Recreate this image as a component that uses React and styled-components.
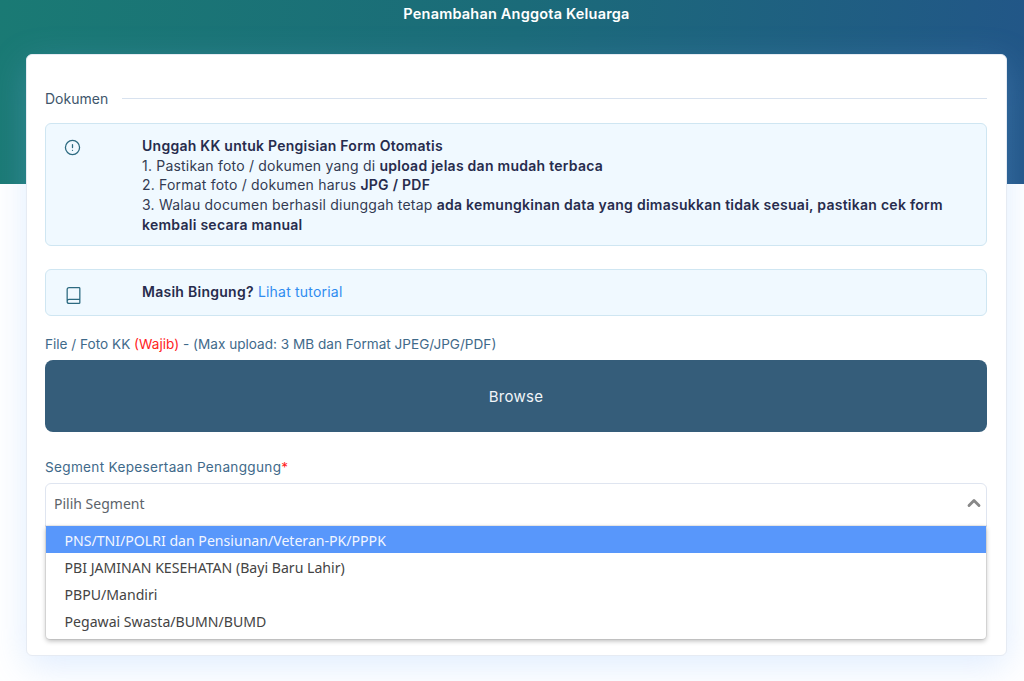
import React from "react";
import styled, { createGlobalStyle } from "styled-components";
import { CircleAlert, Book, ChevronUp } from "lucide-react";

const Global = createGlobalStyle`
  html, body { margin: 0; padding: 0; background: #fff; }
  * { box-sizing: border-box; }
`;
const Page = styled.div`
  height: 681px;
  overflow: hidden;
  font-family: Inter, "Noto Sans", sans-serif;
  background:
    linear-gradient(97deg, #1a7a74 0%, #1b6b79 50%, #225688 100%) top / 100% 184px no-repeat,
    #fff;
  padding: 0 17px 0 26px;
`;
const Title = styled.h1`
  margin: 0;
  height: 54px;
  padding-top: 5px;
  text-align: center;
  font-size: 14.5px;
  line-height: 18px;
  font-weight: 600;
  color: #fff;
  letter-spacing: 0.2px;
`;
const Card = styled.main`
  height: 602px;
  background: #fff;
  border: 1px solid #e6ebf3;
  border-radius: 6px;
  padding: 34px 19px 0 18px;
  box-shadow: 0 10px 36px rgba(130, 180, 250, 0.26);
`;
const Section = styled.div`
  display: flex;
  align-items: center;
  gap: 14px;
  height: 18px;
  font-size: 14px;
  color: #40566b;
`;
const Rule = styled.div`
  flex: 1;
  height: 1px;
  background: #d8e2ef;
`;
const Alert = styled.div`
  display: grid;
  grid-template-columns: 78px 1fr;
  margin-top: ${(p) => p.$top}px;
  min-height: ${(p) => p.$h}px;
  padding: 12px 20px 0 18px;
  background: #f0f9ff;
  border: 1px solid #cfe6f2;
  border-radius: 6px;
  font-size: 14px;
  letter-spacing: 0.2px;
  line-height: 19.7px;
  color: #333b52;
`;
const IconCell = styled.div`
  color: #2c6a80;
  padding-top: ${(p) => p.$pt}px;
`;
const Strong = styled.b`
  font-weight: 600;
  color: #272c4d;
  letter-spacing: 0.26px;
`;
const Link = styled.span`
  color: #2f8cf0;
`;
const Label = styled.div`
  margin-top: ${(p) => p.$top}px;
  font-size: 13.6px;
  line-height: 18px;
  letter-spacing: ${(p) => p.$ls || 0}px;
  color: #3f6a8a;
`;
const Red = styled.span`
  color: #ff2222;
`;
const Browse = styled.div`
  margin-top: 7px;
  height: 72px;
  display: flex;
  align-items: center;
  justify-content: center;
  background: #355d7a;
  border-radius: 8px;
  color: #f1f5f8;
  font-size: 15px;
  letter-spacing: 0.3px;
`;
const SelectWrap = styled.div`
  position: relative;
  margin-top: 7px;
`;
const Control = styled.div`
  height: 44px;
  display: flex;
  align-items: center;
  justify-content: space-between;
  padding: 0 2px 4px 8px;
  background: #fff;
  border: 1px solid #dfe5f0;
  border-radius: 6px 6px 0 0;
  font-family: "Noto Sans", sans-serif;
  font-size: 14px;
  color: #5c636a;
`;
const Menu = styled.ul`
  position: absolute;
  top: 43px;
  left: 1px;
  right: 1px;
  margin: 0;
  padding: 0 0 5px;
  list-style: none;
  background: #fff;
  border-radius: 0 0 4px 4px;
  box-shadow: 0 0 0 1px rgba(0, 0, 0, 0.06), 0 2px 5px rgba(0, 0, 0, 0.28);
  font-family: "Noto Sans", sans-serif;
  font-size: 14.1px;
`;
const Option = styled.li`
  height: 27px;
  padding: 1px 0 0 18.5px;
  line-height: 27px;
  background: ${(p) => (p.$active ? "#5897fb" : "#fff")};
  color: ${(p) => (p.$active ? "#f2f6ff" : "#444")};
`;

export default function App() {
  return (
    <Page>
      <Global />
      <Title>Penambahan Anggota Keluarga</Title>
      <Card>
        <Section>
          Dokumen
          <Rule />
        </Section>
        <Alert $top={16} $h={123}>
          <IconCell $pt={3}>
            <CircleAlert size={17} strokeWidth={1.8} />
          </IconCell>
          <div>
            <Strong>Unggah KK untuk Pengisian Form Otomatis</Strong>
            <br />
            1. Pastikan foto / dokumen yang di <Strong>upload jelas dan mudah terbaca</Strong>
            <br />
            2. Format foto / dokumen harus <Strong>JPG / PDF</Strong>
            <br />
            3. Walau documen berhasil diunggah tetap{" "}
            <Strong>ada kemungkinan data yang dimasukkan tidak sesuai, pastikan cek form kembali secara manual</Strong>
          </div>
        </Alert>
        <Alert $top={23} $h={47}>
          <IconCell $pt={4}>
            <Book size={19} strokeWidth={1.6} />
          </IconCell>
          <div>
            <Strong>Masih Bingung?</Strong> <Link>Lihat tutorial</Link>
          </div>
        </Alert>
        <Label $top={19}>
          File / Foto KK <Red>(Wajib)</Red> - (Max upload: 3 MB dan Format JPEG/JPG/PDF)
        </Label>
        <Browse>Browse</Browse>
        <Label $top={26} $ls={0.3}>
          Segment Kepesertaan Penanggung<Red>*</Red>
        </Label>
        <SelectWrap>
          <Control>
            Pilih Segment
            <ChevronUp size={20} strokeWidth={3.4} color="#888" />
          </Control>
          <Menu>
            <Option $active>PNS/TNI/POLRI dan Pensiunan/Veteran-PK/PPPK</Option>
            <Option>PBI JAMINAN KESEHATAN (Bayi Baru Lahir)</Option>
            <Option>PBPU/Mandiri</Option>
            <Option>Pegawai Swasta/BUMN/BUMD</Option>
          </Menu>
        </SelectWrap>
      </Card>
    </Page>
  );
}
